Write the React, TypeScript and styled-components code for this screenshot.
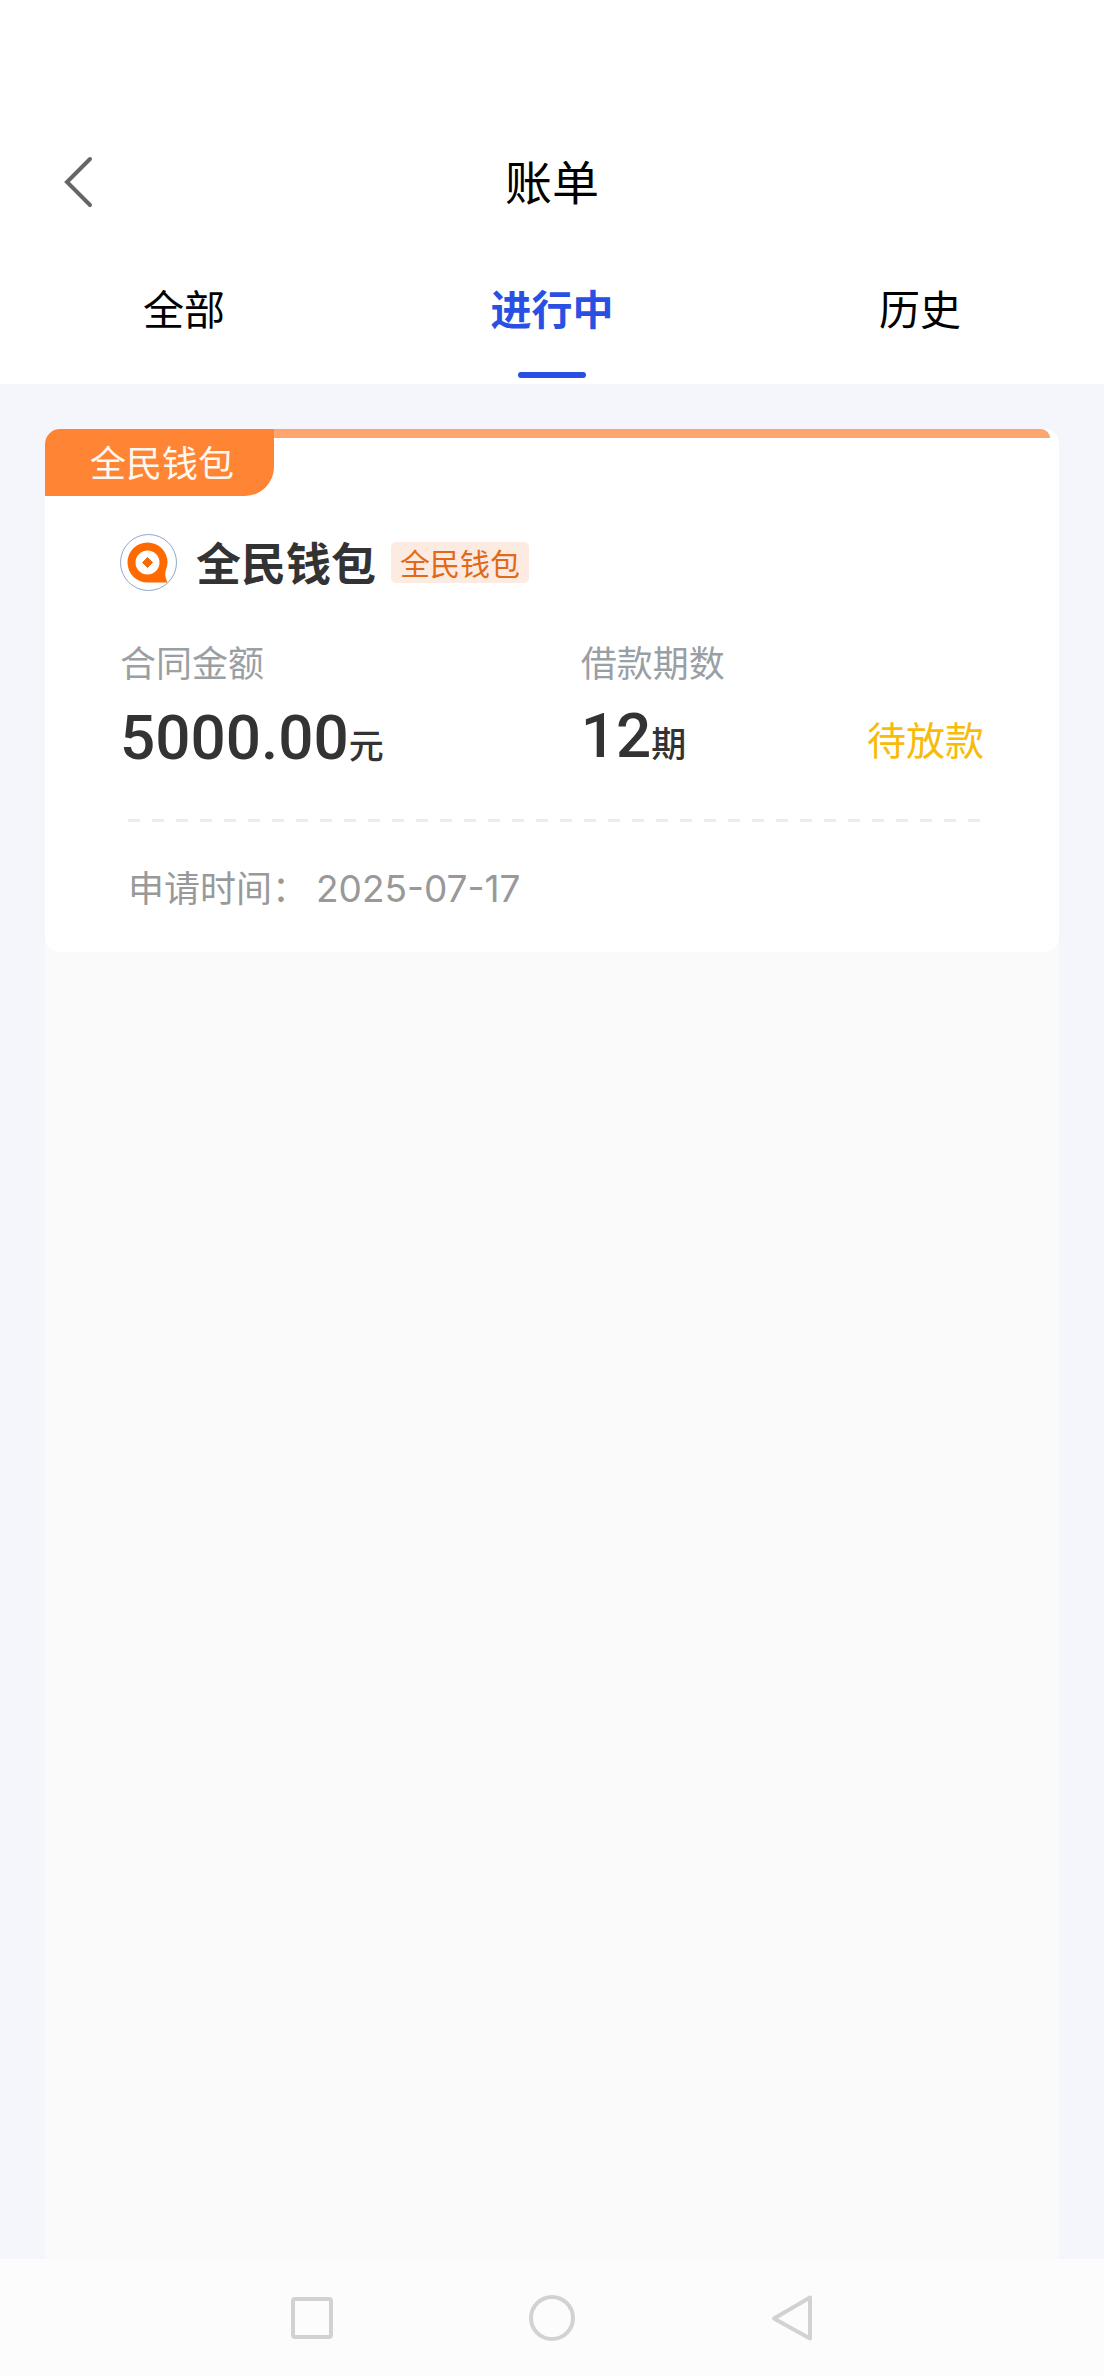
import React, { useState } from "react";
import styled, { createGlobalStyle } from "styled-components";

const GlobalStyle = createGlobalStyle`
  *, *::before, *::after { box-sizing: border-box; }
  body {
    margin: 0;
    background: #f4f6fc;
    font-family: "Noto Sans CJK SC", sans-serif;
    color: #333;
  }
  button {
    margin: 0;
    padding: 0;
    border: 0;
    background: none;
    color: inherit;
    font: inherit;
    cursor: pointer;
  }
`;

const Screen = styled.div`
  display: flex;
  flex-direction: column;
  min-height: 100vh;
`;

const Top = styled.header`
  padding-top: 128px;
  background: #fff;
`;

const TitleBar = styled.div`
  display: grid;
  grid-template-columns: 156px 1fr 156px;
  align-items: center;
  height: 108px;
`;

const BackButton = styled.button`
  display: flex;
  align-items: center;
  justify-content: center;
  height: 100%;
`;

const Title = styled.h1`
  margin: 0;
  padding-bottom: 4px;
  font-size: 47px;
  font-weight: 400;
  line-height: 64px;
  text-align: center;
  color: #000;
`;

const Tabs = styled.div`
  display: flex;
`;

const Tab = styled.button<{ $active: boolean }>`
  position: relative;
  flex: 1;
  height: 148px;
  padding-bottom: 6px;
  font-size: 41px;
  line-height: 64px;
  font-weight: ${(p) => (p.$active ? 700 : 400)};
  color: ${(p) => (p.$active ? "#2a50e3" : "#000")};

  &::after {
    content: "";
    display: ${(p) => (p.$active ? "block" : "none")};
    position: absolute;
    bottom: 6px;
    left: 50%;
    width: 68px;
    height: 6px;
    margin-left: -34px;
    border-radius: 3px;
    background: #2a50e3;
  }
`;

const Content = styled.main`
  flex: 1;
  display: flex;
  flex-direction: column;
  padding: 45px 45px 0;
`;

const List = styled.div`
  flex: 1;
  border-radius: 15px 15px 0 0;
  background: #fafafa;
`;

const Card = styled.article`
  border-radius: 15px;
  background: #fff;
`;

const CardTop = styled.div`
  display: flex;
  align-items: flex-start;
  padding-right: 9px;
`;

const Ribbon = styled.span`
  padding: 0 40px 2px 45px;
  border-radius: 15px 0 29px 0;
  background: #ff8434;
  color: #fff8ee;
  font-size: 36px;
  line-height: 65px;
`;

const Strip = styled.span`
  flex: 1;
  height: 9px;
  border-top-right-radius: 9px;
  background: #fca56c;
`;

const CardBody = styled.div`
  padding: 38px 75px 41px;
`;

const Product = styled.div`
  display: flex;
  align-items: center;
  height: 57px;
`;

const ProductName = styled.h2`
  margin: 0 15px 0 19px;
  padding-bottom: 2px;
  font-size: 45px;
  line-height: 55px;
  font-weight: 700;
`;

const Badge = styled.span`
  padding: 0 9px;
  border-radius: 5px;
  background: #fdebe1;
  color: #e06a1a;
  font-size: 30px;
  line-height: 41px;
`;

const Facts = styled.dl`
  display: grid;
  grid-template-columns: 8fr 7fr;
  margin: 48px 0 0;
`;

const Label = styled.dt`
  font-size: 36px;
  line-height: 44px;
  color: #9a9fa5;
`;

const Value = styled.dd<{ $line: number }>`
  margin: 23px 0 0;
  font-family: Roboto, "Noto Sans CJK SC", sans-serif;
  font-size: 62px;
  font-weight: 500;
  line-height: ${(p) => p.$line}px;
`;

const Unit = styled.span`
  font-family: "Noto Sans CJK SC", sans-serif;
  font-size: 35px;
  line-height: 35px;
`;

const TermCell = styled.div`
  display: flex;
  justify-content: space-between;
  align-items: flex-end;
`;

const TermFact = styled.div`
  align-self: flex-start;
`;

const Status = styled.dd`
  margin: 0 0 8px;
  font-size: 39px;
  line-height: 48px;
  color: #f8bb0a;
`;

const Footer = styled.div`
  padding: 49px 4px 0 8px;
`;

const Dashes = styled.div`
  height: 3px;
  background: repeating-linear-gradient(90deg, #ececec 0 12px, transparent 12px 24px);
`;

const Applied = styled.p`
  display: flex;
  align-items: baseline;
  gap: 8px;
  margin: 42px 0 0;
  font-size: 36px;
  line-height: 44px;
  color: #999;
`;

const DateText = styled.time`
  font-family: Inter, "Noto Sans CJK SC", sans-serif;
  font-size: 37px;
`;

const SystemNav = styled.nav`
  display: flex;
  justify-content: center;
  height: 117px;
  background: #fcfcfc;
`;

const NavButton = styled.button`
  display: flex;
  align-items: center;
  justify-content: center;
  width: 240px;
`;

const Logo = () => (
  <svg width="57" height="57" viewBox="0 0 57 57" aria-hidden="true">
    <circle cx="28.5" cy="28.5" r="28" fill="#fff" stroke="#8fa6cf" strokeWidth="1" />
    <path
      d="M27.5 8.5a20 20 0 0 1 20 20q0 3-1.500 7-2 6 1.500 13H27.500a20 20 0 0 1 0-40z"
      fill="#ff6a00"
    />
    <circle cx="27.5" cy="28.5" r="12" fill="#fff" />
    <path d="M27.5 23.5l5 5-5 5-5-5z" fill="#f26a0c" stroke="#f26a0c" strokeLinejoin="round" />
  </svg>
);

const tabs = ["全部", "进行中", "历史"];

export default function App() {
  const [active, setActive] = useState(1);

  return (
    <>
      <GlobalStyle />
      <Screen>
        <Top>
          <TitleBar>
            <BackButton type="button" aria-label="返回">
              <svg width="30" height="52" viewBox="0 0 30 52" fill="none">
                <path d="M27 3L4 26l23 23" stroke="#666" strokeWidth="4" strokeLinecap="round" />
              </svg>
            </BackButton>
            <Title>账单</Title>
          </TitleBar>
          <Tabs role="tablist">
            {tabs.map((name, i) => (
              <Tab
                key={name}
                type="button"
                role="tab"
                aria-selected={i === active}
                $active={i === active}
                onClick={() => setActive(i)}
              >
                {name}
              </Tab>
            ))}
          </Tabs>
        </Top>

        <Content>
          <List>
            <Card>
              <CardTop>
                <Ribbon>全民钱包</Ribbon>
                <Strip />
              </CardTop>
              <CardBody>
                <Product>
                  <Logo />
                  <ProductName>全民钱包</ProductName>
                  <Badge>全民钱包</Badge>
                </Product>
                <Facts>
                  <div>
                    <Label>合同金额</Label>
                    <Value $line={64}>
                      5000.00<Unit>元</Unit>
                    </Value>
                  </div>
                  <TermCell>
                    <TermFact>
                      <Label>借款期数</Label>
                      <Value $line={60}>
                        12<Unit>期</Unit>
                      </Value>
                    </TermFact>
                    <Status>待放款</Status>
                  </TermCell>
                </Facts>
                <Footer>
                  <Dashes />
                  <Applied>
                    <span>申请时间：</span>
                    <DateText dateTime="2025-07-17">2025-07-17</DateText>
                  </Applied>
                </Footer>
              </CardBody>
            </Card>
          </List>
        </Content>

        <SystemNav>
          <NavButton type="button" aria-label="最近任务">
            <svg width="48" height="48" viewBox="0 0 48 48" fill="none" stroke="#d2d2d2" strokeWidth="4">
              <rect x="5" y="5" width="38" height="38" rx="2" />
            </svg>
          </NavButton>
          <NavButton type="button" aria-label="主屏幕">
            <svg width="48" height="48" viewBox="0 0 48 48" fill="none" stroke="#d2d2d2" strokeWidth="4">
              <circle cx="24" cy="24" r="21" />
            </svg>
          </NavButton>
          <NavButton type="button" aria-label="返回上一页">
            <svg width="48" height="48" viewBox="0 0 48 48" fill="none" stroke="#d2d2d2" strokeWidth="4" strokeLinejoin="round">
              <path d="M42 3.5v41L6 24.5z" />
            </svg>
          </NavButton>
        </SystemNav>
      </Screen>
    </>
  );
}
